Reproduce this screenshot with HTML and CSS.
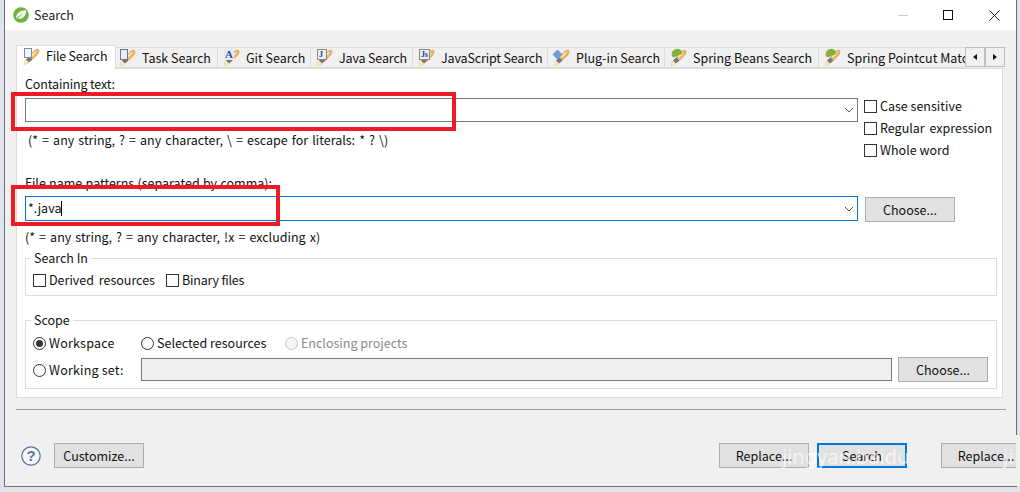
FILE: index.html
```html
<!DOCTYPE html>
<html lang="en">
<head>
<meta charset="utf-8">
<title>Search</title>
<link rel="stylesheet" href="styles.css">
</head>
<body>
<svg class="defs" width="0" height="0" aria-hidden="true">
  <symbol id="torch" viewBox="0 0 17 17">
    <path d="M1 16.5 L2.4 12.4 L5.6 15.2 Z" fill="#fff6c8" stroke="#dcc47a" stroke-width=".6"/>
    <path d="M3 11.4 L6.4 8.2 L9.6 11.4 L6 14.6 Z" fill="#7b776f"/>
    <path d="M6.4 8 L11 3 Q13.4 .6 15.6 1.4 Q16.8 3.6 14.6 6.2 L9.8 11 Z" fill="#ecbb68" stroke="#cf9545" stroke-width=".7"/>
    <path d="M8.4 8 L12.8 3.4" stroke="#fdeec6" stroke-width="1.4"/>
  </symbol>
</svg>
<div class="screen">
  <div class="dialog">
    <header class="titlebar">
      <svg class="logo" viewBox="0 0 16 16" aria-hidden="true">
        <circle cx="8" cy="8" r="7.8" fill="#6db33f"/>
        <path d="M3.2 11.8 C2.4 7 7 3 13.2 3.4 C13.4 8.8 9 13 4.6 11.4 C6.5 9.8 8 8.4 10 6.6 C7.6 7.8 5.4 9.4 3.2 11.8 Z" fill="#f2f8ee"/>
      </svg>
      <span class="title">Search</span>
      <div class="winctl">
        <span class="min"></span>
        <span class="max"></span>
        <svg class="close" viewBox="0 0 11 11" aria-hidden="true"><path d="M.5 .5 L10.5 10.5 M10.5 .5 L.5 10.5" stroke="#222" fill="none"/></svg>
      </div>
    </header>

    <div class="body">
      <div class="tabbar">
        <div class="tabs">
          <div class="tab active w99"><svg class="ticon"><use href="#torch"/></svg><span class="glyph doc"></span>File Search</div>
          <div class="tab tab-task w102"><svg class="ticon"><use href="#torch"/></svg><span class="glyph clip"></span>Task Search</div>
          <div class="tab w93"><svg class="ticon"><use href="#torch"/></svg><span class="glyph txt">A</span>Git Search</div>
          <div class="tab tight w102"><svg class="ticon"><use href="#torch"/></svg><span class="glyph box">J</span>Java Search</div>
          <div class="tab tight w135"><svg class="ticon"><use href="#torch"/></svg><span class="glyph box">Js</span>JavaScript Search</div>
          <div class="tab w117"><svg class="ticon"><use href="#torch"/></svg><span class="glyph plug"></span>Plug-in Search</div>
          <div class="tab w154"><svg class="ticon"><use href="#torch"/></svg><span class="glyph leaf"></span>Spring Beans Search</div>
          <div class="tab w170"><svg class="ticon"><use href="#torch"/></svg><span class="glyph leaf"></span>Spring Pointcut Matches</div>
        </div>
        <div class="scroller">
          <button class="arrow" type="button"><span class="tri-l"></span></button>
          <button class="arrow" type="button"><span class="tri-r"></span></button>
        </div>
      </div>

      <div class="panel">
        <div class="top-grid">
          <div class="top-left">
            <div class="label label-text">Containing text:</div>
            <div class="combo"><span class="combo-text"></span><svg class="chev" viewBox="0 0 10 6" aria-hidden="true"><path d="M1 1 L5 5 L9 1" fill="none" stroke="#555"/></svg></div>
            <div class="hint hint-a">(* = any string, ? = any character, \ = escape for literals: * ? \)</div>
          </div>
          <div class="opts">
            <label class="check"><span class="cb"></span>Case sensitive</label>
            <label class="check wide"><span class="cb"></span>Regular expression</label>
            <label class="check"><span class="cb"></span>Whole word</label>
          </div>
        </div>

        <div class="label label-file">File name patterns (separated by comma):</div>
        <div class="file-row">
          <div class="combo focus"><span class="combo-text">*.java<i class="caret"></i></span><svg class="chev" viewBox="0 0 10 6" aria-hidden="true"><path d="M1 1 L5 5 L9 1" fill="none" stroke="#555"/></svg></div>
          <button class="btn" type="button">Choose...</button>
        </div>
        <div class="hint hint-b">(* = any string, ? = any character, !x = excluding x)</div>

        <fieldset class="group group-in">
          <legend>Search In</legend>
          <div class="row">
            <label class="check c-derived wide"><span class="cb"></span>Derived resources</label>
            <label class="check c-binary"><span class="cb"></span>Binary files</label>
          </div>
        </fieldset>

        <fieldset class="group group-scope">
          <legend>Scope</legend>
          <div class="row">
            <label class="check c-ws"><span class="radio on"></span>Workspace</label>
            <label class="check c-sel"><span class="radio"></span>Selected resources</label>
            <label class="check off"><span class="radio"></span>Enclosing projects</label>
          </div>
          <div class="row set-row">
            <label class="check c-set"><span class="radio"></span>Working set:</label>
            <div class="set-input"></div>
            <button class="btn" type="button">Choose...</button>
          </div>
        </fieldset>
      </div>

      <div class="sep"></div>

      <footer class="footer">
        <svg class="help" viewBox="0 0 20 20" aria-hidden="true">
          <circle cx="10" cy="10" r="9.2" fill="#f4f6fa" stroke="#5f7396" stroke-width="1.3"/>
          <text x="10" y="15" text-anchor="middle" class="help-q">?</text>
        </svg>
        <button class="btn" type="button">Customize...</button>
        <span class="spring"></span>
        <button class="btn" type="button">Replace...</button>
        <button class="btn default" type="button">Search</button>
        <button class="btn last" type="button">Replace...</button>
      </footer>
    </div>
  </div>

  <div class="patch"></div>
  <div class="mark mark-a"></div>
  <div class="mark mark-b"></div>
  <div class="wm wm-a">jingyan.baidu</div>
  <div class="wm wm-b">ji</div>
</div>
</body>
</html>
```
FILE: styles.css
```css
* { box-sizing: border-box; }
html, body { margin: 0; padding: 0; }
body { width: 1020px; height: 492px; overflow: hidden; }
.defs { position: absolute; }
.screen {
  position: relative; width: 1020px; height: 492px; overflow: hidden;
  background: #dfe3ec;
  font: 12.5px/16px "Noto Sans CJK SC", "Noto Sans", sans-serif;
  color: #111;
}
.dialog {
  width: 1013px; height: 487px; margin-left: 4px;
  background: #f0f0f0;
  border: 1px solid #6e6e6e; border-top: 0;
  display: flex; flex-direction: column;
}
.titlebar {
  height: 30px; flex: none; background: #fff;
  display: flex; align-items: center; padding-left: 8px;
}
.logo { width: 16px; height: 16px; }
.title { margin-left: 5px; font-size: 12.5px; color: #222; }
.winctl { margin-left: auto; display: flex; align-items: center; }
.min { width: 10px; height: 1px; background: #ccc; margin-right: 35px; }
.max { width: 10px; height: 10px; border: 1px solid #111; margin-right: 36px; }
.close { width: 11px; height: 11px; margin-right: 16px; }

.body { flex: 1; padding: 15px 12px 0 11px; min-height: 0; }
.tabbar { display: flex; align-items: flex-end; height: 24px; width: 988px; position: relative; z-index: 1; }
.tabs { display: flex; align-items: flex-end; width: 949px; height: 24px; overflow: hidden; flex: none; }
.tab {
  flex: none; height: 22px; padding-left: 28px;
  display: block; position: relative; white-space: nowrap; line-height: 20px;
  background: #f0f0f0;
  border: 1px solid #dcdcdc; border-left: 0; border-bottom: 2px solid #dcdcdc;
}
.tab.active {
  height: 24px; line-height: 20px; background: #fff; padding-left: 29px;
  letter-spacing: -.2px;
  border: 1px solid #dcdcdc; border-bottom: 0;
}
.tab-task { padding-left: 26px; }
.tight { letter-spacing: -.15px; }
.w99 { width: 100px; } .w102 { width: 102px; } .w93 { width: 93px; }
.w135 { width: 135px; } .w117 { width: 117px; } .w154 { width: 154px; } .w170 { width: 170px; }
.ticon { position: absolute; left: 5px; top: 1px; width: 17px; height: 17px; }
.tab-task .ticon { left: 3px; }
.tab.active .ticon { left: 6px; top: 2px; }
.glyph { position: absolute; left: 6px; top: 1px; }
.tab-task .glyph { left: 4px; }
.tab.active .glyph { left: 7px; top: 2px; }
.doc { width: 8px; height: 10px; background: #eef3fa; border: 1px solid #7f8aa3; }
.clip { width: 8px; height: 11px; background: #e8edf5; border: 1px solid #6b7690; }
.txt { font: bold 11px/11px "Liberation Serif", serif; color: #1c4f9c; background: #e6ecf7; padding: 0 1px; }
.box { min-width: 10px; height: 11px; padding: 0 1px; background: #e9eef8; border: 1px solid #8f8a70; font: bold 8px/9px "Liberation Serif", serif; color: #1c3f8c; }
.plug { width: 7px; height: 7px; background: #6f9bd8; transform: rotate(45deg); top: 3px; }
.leaf { width: 11px; height: 7px; background: #86b13f; border-radius: 5px 5px 2px 2px; top: 1px; transform: rotate(-20deg); }
.scroller { display: flex; height: 20px; margin-bottom: 2px; }
.arrow {
  width: 20px; height: 20px; padding: 0; background: #f0f0f0;
  border: 1px solid #bdbdbd; display: flex; align-items: center; justify-content: center;
}
.tri-l, .tri-r { width: 0; height: 0; border: 3px solid transparent; }
.tri-l { border-right: 4px solid #111; border-left: 0; }
.tri-r { border-left: 4px solid #111; border-right: 0; }

.panel {
  width: 987px; height: 330px; margin-top: -1px; background: #fff;
  border: 1px solid #dcdcdc; padding: 7px 5px 0 8px;
}
.top-grid { display: flex; height: 99px; }
.top-left { width: 833px; flex: none; }
.label { height: 16px; }
.label-text { letter-spacing: -.15px; }
.label-file { word-spacing: .5px; }
.combo {
  height: 24px; margin-top: 6px; background: #fff;
  border: 1px solid #7a7a7a; display: flex; align-items: center; justify-content: space-between;
  padding: 0 3px 0 2px;
}
.combo-text { display: inline-flex; align-items: center; padding-bottom: 1px; }
.chev { width: 10px; height: 6px; }
.combo.focus { flex: 1; margin-top: 0; height: 25px; border-color: #0078d7; }
.caret { display: block; width: 1px; height: 15px; background: #000; }
.hint { word-spacing: 1.25px; }
.hint-a { margin: 10px 0 0 3px; }
.opts { display: flex; flex-direction: column; gap: 4px; margin: 21px 0 0 6px; }
.check { display: flex; align-items: center; height: 18px; line-height: 16px; white-space: nowrap; }
.wide { word-spacing: 2px; }
.cb { width: 13px; height: 13px; border: 1px solid #333; background: #fff; margin: 1px 3px 0 0; flex: none; }
.radio { width: 13px; height: 13px; border: 1px solid #333; border-radius: 50%; background: #fff; margin-right: 3px; flex: none; display: flex; align-items: center; justify-content: center; }
.radio.on::after { content: ""; width: 7px; height: 7px; border-radius: 50%; background: #333; }

.file-row { display: flex; align-items: flex-start; margin-top: 5px; width: 930px; }
.file-row .btn { margin: 1px 0 0 7px; }
.hint-b { margin-top: 7px; }

.btn {
  width: 90px; height: 25px; padding: 0; flex: none;
  background: #e1e1e1; border: 1px solid #adadad;
  font: inherit; color: #111;
}
.group {
  margin: 5px 0 0; padding: 0 7px; width: 972px;
  border: 1px solid #dcdcdc;
  min-inline-size: 0;
}
.group legend { padding: 0 3px; margin-left: -2px; line-height: 16px; }
.group-in { height: 46px; }
.group-scope { height: 77px; margin-top: 16px; }
.row { display: flex; align-items: center; height: 18px; margin-top: 5px; }
.group-scope .row:first-of-type { margin-top: 6px; }
.c-derived { margin-right: 11px; }
.c-binary { letter-spacing: -.2px; }
.c-ws { width: 108px; letter-spacing: .2px; }
.c-sel { width: 144px; }
.off { color: #8a8a8a; }
.off .radio { border-color: #c4c4c4; background: #f6f6f6; }
.set-row { height: 25px; }
.c-set { width: 108px; letter-spacing: .2px; padding-top: 1px; }
.set-input { width: 751px; height: 23px; background: #f0f0f0; border: 1px solid #7a7a7a; flex: none; }
.set-row .btn { margin-left: 6px; }

.sep { height: 1px; width: 990px; background: #a0a0a0; margin-top: 11px; }
.footer { display: flex; align-items: center; margin-top: 33px; padding-left: 5px; width: 1015px; height: 25px; }
.help { width: 20px; height: 20px; margin-right: 13px; }
.help-q { font: bold 15px "Liberation Sans", sans-serif; fill: #5f7396; }
.spring { flex: 1; }
.btn.default { border: 2px solid #0078d7; margin-left: 8px; }
.btn.last { margin-left: 34px; }

.patch { position: absolute; left: 1016px; top: 435px; width: 4px; height: 51px; background: #f0f0f0; }
.mark { position: absolute; border: 4px solid #ed1c24; }
.mark-a { left: 11px; top: 92px; width: 445px; height: 39px; }
.mark-b { left: 11px; top: 185px; width: 269px; height: 41px; }
.wm {
  position: absolute; top: 444px; font: 20px/26px "Noto Sans", sans-serif;
  color: rgba(255,255,255,.65); white-space: nowrap;
}
.wm-a { left: 782px; }
.wm-b { left: 1003px; }
```
